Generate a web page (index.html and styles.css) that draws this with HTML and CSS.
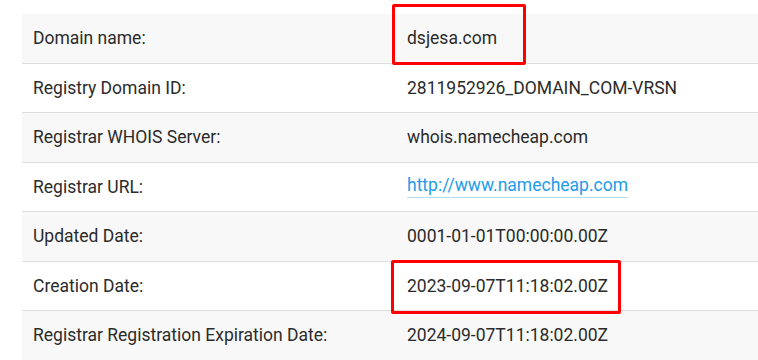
FILE: index.html
```html
<!DOCTYPE html>
<html>
<head>
<meta charset="utf-8">
<link rel="stylesheet" href="styles.css">
</head>
<body>
<div class="page">
  <div class="whois">
    <div class="row odd">
      <div class="cell label">Domain name:</div>
      <div class="cell value marked mark-domain">dsjesa.com</div>
    </div>
    <div class="row">
      <div class="cell label">Registry Domain ID:</div>
      <div class="cell value">2811952926_DOMAIN_COM-VRSN</div>
    </div>
    <div class="row odd">
      <div class="cell label">Registrar WHOIS Server:</div>
      <div class="cell value">whois.namecheap.com</div>
    </div>
    <div class="row">
      <div class="cell label">Registrar URL:</div>
      <div class="cell value"><a class="link" href="#">http://www.namecheap.com</a></div>
    </div>
    <div class="row odd">
      <div class="cell label">Updated Date:</div>
      <div class="cell value">0001-01-01T00:00:00.00Z</div>
    </div>
    <div class="row">
      <div class="cell label">Creation Date:</div>
      <div class="cell value marked mark-date">2023-09-07T11:18:02.00Z</div>
    </div>
    <div class="row odd">
      <div class="cell label">Registrar Registration Expiration Date:</div>
      <div class="cell value">2024-09-07T11:18:02.00Z</div>
    </div>
  </div>
</div>
</body>
</html>
```

FILE: styles.css
```css
html, body {
  margin: 0;
  padding: 0;
  background: #ffffff;
  overflow: hidden;
}

.page {
  padding: 14px 0 0 22px;
  font-family: Roboto, "Liberation Sans", sans-serif;
  font-size: 17.5px;
  color: #2b2b2b;
}

.whois {
  width: 780px;
  display: flex;
  flex-direction: column;
}

.row {
  display: grid;
  grid-template-columns: 374px 1fr;
  height: 49.5px;
  box-sizing: border-box;
  border-bottom: 1px solid #dddddd;
  background: #ffffff;
}

.row.odd {
  background: #f8f8f8;
}

.cell {
  display: flex;
  align-items: center;
  padding-left: 11px;
  white-space: nowrap;
}

.marked {
  position: relative;
}

.marked::before {
  content: "";
  position: absolute;
  box-sizing: border-box;
  border: 3px solid #ff0000;
  border-radius: 2px;
}

.mark-domain::before {
  left: -4px;
  width: 134px;
  top: -10px;
  height: 61px;
}

.mark-date::before {
  left: -5px;
  width: 230px;
  top: -2px;
  height: 54px;
}

.link {
  color: #1e9be9;
  text-decoration: none;
  border-bottom: 1px solid #b5dcf5;
  padding-bottom: 2px;
}
```
